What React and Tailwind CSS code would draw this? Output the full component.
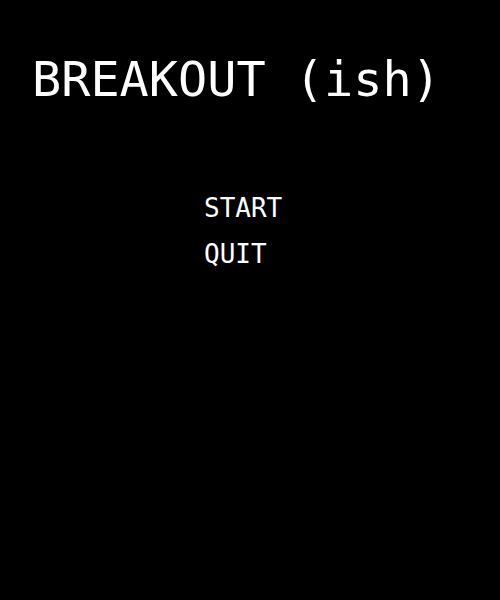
export default function App() {
  return (
    <div className="w-[500px] h-[600px] bg-black text-white font-['DejaVu_Sans_Mono',monospace]">
      {/* TITLE */}
      <h1 className="pt-[51px] pl-[32px] text-[48.5px] leading-[56px]">BREAKOUT (ish)</h1>

      {/* MENU */}
      <ul className="mt-[86px] pl-[204px] flex flex-col gap-[16px] text-[26px] leading-[30px]">
        <li>START</li>
        <li>QUIT</li>
      </ul>
    </div>
  );
}
